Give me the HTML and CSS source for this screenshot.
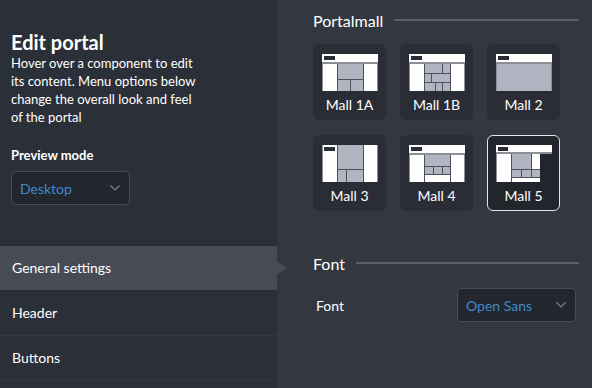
FILE: index.html
```html
<!DOCTYPE html>
<html>
<head>
	<title>Edit portal</title>
	<meta charset="UTF-8">
	<link rel="stylesheet" href="styles.css">
</head>
<body>
<div id="editor">
	<div id="sidebar">
		<div class="intro">
			<h1 class="intro-title">Edit portal</h1>
			<p class="intro-text">Hover over a component to edit its content. Menu options below change the overall look and feel of the portal</p>
			<h2 class="field-label">Preview mode</h2>
			<div class="select">
				<span>Desktop</span>
				<svg width="10" height="6" viewBox="0 0 10 6"><path d="M0.5 0.5 L5 5 L9.5 0.5" fill="none" stroke="#7f838c" stroke-width="1.2"/></svg>
			</div>
		</div>
		<ul class="menu">
			<li class="menu-item on">General settings</li>
			<li class="menu-item">Header</li>
			<li class="menu-item">Buttons</li>
		</ul>
	</div>
	<div id="main">
		<div class="section-head">
			<span>Portalmall</span>
			<div class="section-line"></div>
		</div>
		<div class="layouts">
			<div class="layout">
				<svg class="thumb" width="56" height="37" viewBox="0 0 56 37" shape-rendering="crispEdges">
					<rect x="0" y="0" width="56" height="37" fill="#fff"/>
					<rect x="0" y="8" width="56" height="2" fill="#8c8f97"/>
					<rect x="2" y="2" width="11" height="4" fill="#2a2d35"/>
					<rect x="0" y="10" width="1" height="27" fill="#8c8f97"/>
					<rect x="55" y="10" width="1" height="27" fill="#8c8f97"/>
					<rect x="15" y="10" width="27" height="27" fill="#4d5159"/>
					<rect x="16" y="10" width="25" height="15" fill="#b0b5c1"/>
					<rect x="16" y="26" width="12" height="11" fill="#b0b5c1"/>
					<rect x="29" y="26" width="12" height="11" fill="#b0b5c1"/>
				</svg>
				<div class="layout-name">Mall 1A</div>
			</div>
			<div class="layout">
				<svg class="thumb" width="56" height="37" viewBox="0 0 56 37" shape-rendering="crispEdges">
					<rect x="0" y="0" width="56" height="37" fill="#fff"/>
					<rect x="0" y="8" width="56" height="2" fill="#8c8f97"/>
					<rect x="2" y="2" width="11" height="4" fill="#2a2d35"/>
					<rect x="0" y="10" width="1" height="27" fill="#8c8f97"/>
					<rect x="55" y="10" width="1" height="27" fill="#8c8f97"/>
					<rect x="15" y="10" width="27" height="27" fill="#4d5159"/>
					<rect x="16" y="10" width="17" height="9" fill="#b0b5c1"/>
					<rect x="34" y="10" width="7" height="9" fill="#b0b5c1"/>
					<rect x="16" y="20" width="6" height="8" fill="#b0b5c1"/>
					<rect x="23" y="20" width="18" height="8" fill="#b0b5c1"/>
					<rect x="16" y="29" width="10" height="8" fill="#b0b5c1"/>
					<rect x="27" y="29" width="6" height="8" fill="#b0b5c1"/>
					<rect x="34" y="29" width="7" height="8" fill="#b0b5c1"/>
				</svg>
				<div class="layout-name">Mall 1B</div>
			</div>
			<div class="layout">
				<svg class="thumb" width="56" height="37" viewBox="0 0 56 37" shape-rendering="crispEdges">
					<rect x="0" y="0" width="56" height="37" fill="#fff"/>
					<rect x="0" y="8" width="56" height="2" fill="#8c8f97"/>
					<rect x="2" y="2" width="11" height="4" fill="#2a2d35"/>
					<rect x="0" y="10" width="56" height="27" fill="#8c8f97"/>
					<rect x="1" y="10" width="54" height="27" fill="#b0b5c1"/>
				</svg>
				<div class="layout-name">Mall 2</div>
			</div>
			<div class="layout">
				<svg class="thumb" width="56" height="37" viewBox="0 0 56 37" shape-rendering="crispEdges">
					<rect x="0" y="0" width="56" height="37" fill="#fff"/>
					<rect x="2" y="2" width="11" height="4" fill="#2a2d35"/>
					<rect x="0" y="0" width="1" height="37" fill="#8c8f97"/>
					<rect x="55" y="0" width="1" height="37" fill="#8c8f97"/>
					<rect x="15" y="0" width="27" height="37" fill="#4d5159"/>
					<rect x="16" y="0" width="25" height="24" fill="#b0b5c1"/>
					<rect x="16" y="25" width="8" height="12" fill="#b0b5c1"/>
					<rect x="25" y="25" width="16" height="12" fill="#b0b5c1"/>
				</svg>
				<div class="layout-name">Mall 3</div>
			</div>
			<div class="layout">
				<svg class="thumb" width="56" height="37" viewBox="0 0 56 37" shape-rendering="crispEdges">
					<rect x="0" y="0" width="56" height="37" fill="#fff"/>
					<rect x="0" y="8" width="56" height="2" fill="#8c8f97"/>
					<rect x="2" y="2" width="11" height="4" fill="#2a2d35"/>
					<rect x="0" y="10" width="1" height="27" fill="#8c8f97"/>
					<rect x="55" y="10" width="1" height="27" fill="#8c8f97"/>
					<rect x="15" y="10" width="27" height="27" fill="#4d5159"/>
					<rect x="16" y="10" width="25" height="11" fill="#b0b5c1"/>
					<rect x="16" y="22" width="8" height="7" fill="#b0b5c1"/>
					<rect x="25" y="22" width="8" height="7" fill="#b0b5c1"/>
					<rect x="34" y="22" width="7" height="7" fill="#b0b5c1"/>
					<rect x="16" y="30" width="25" height="7" fill="#fff"/>
				</svg>
				<div class="layout-name">Mall 4</div>
			</div>
			<div class="layout on">
				<svg class="thumb" width="56" height="37" viewBox="0 0 56 37" shape-rendering="crispEdges">
					<rect x="0" y="0" width="56" height="7" fill="#fff"/>
					<rect x="0" y="7" width="56" height="2" fill="#8c8f97"/>
					<rect x="2" y="2" width="10" height="4" fill="#2a2d35"/>
					<rect x="0" y="9" width="15" height="28" fill="#fff"/>
					<rect x="0" y="9" width="1" height="28" fill="#8c8f97"/>
					<rect x="15" y="9" width="29" height="28" fill="#4d5159"/>
					<rect x="16" y="9" width="19" height="15" fill="#b0b5c1"/>
					<rect x="36" y="9" width="8" height="15" fill="#fff"/>
					<rect x="16" y="25" width="9" height="7" fill="#b0b5c1"/>
					<rect x="26" y="25" width="9" height="7" fill="#b0b5c1"/>
					<rect x="36" y="25" width="8" height="7" fill="#b0b5c1"/>
					<rect x="16" y="33" width="28" height="4" fill="#fff"/>
				</svg>
				<div class="layout-name">Mall 5</div>
			</div>
		</div>
		<div class="section-head font-head">
			<span>Font</span>
			<div class="section-line"></div>
		</div>
		<div class="field-row">
			<span class="field-row-label">Font</span>
			<div class="select">
				<span>Open Sans</span>
				<svg width="10" height="6" viewBox="0 0 10 6"><path d="M0.5 0.5 L5 5 L9.5 0.5" fill="none" stroke="#7f838c" stroke-width="1.2"/></svg>
			</div>
		</div>
	</div>
</div>
</body>
</html>
```

FILE: styles.css
```css
body{margin: 0; font-family: Lato, "Noto Sans", sans-serif; color: #fff;}
#editor{display: flex; width: 592px; height: 388px; overflow: hidden; background: #33373f;}

#sidebar{width: 277px; flex-shrink: 0; background: #2b2f37; position: relative; z-index: 1;}
.intro{padding: 30px 11px 0 11px;}
.intro-title{margin: 0; font-size: 20px; line-height: 24px; font-weight: bold;}
.intro-text{margin: 0; width: 195px; font-size: 13px; line-height: 18px;}
.field-label{margin: 20px 0 7px 0; font-size: 13px; line-height: 18px; font-weight: bold;}

.select{display: flex; align-items: center; justify-content: space-between; box-sizing: border-box; width: 119px; height: 34px; padding: 0 9px 0 8px; border: 1px solid #474b55; border-radius: 4px; background: #23262d; color: #3d8ad0; font-size: 14px;}

.menu{list-style: none; margin: 40px 0 0 0; padding: 0; border-top: 1px solid #262a31;}
.menu-item{position: relative; height: 44px; line-height: 44px; padding-left: 12px; font-size: 14px; border-bottom: 1px solid #353942;}
.menu-item.on{background: #474b54; border-bottom-color: #262a31;}
.menu-item.on:after{content: ""; position: absolute; left: 100%; top: 50%; margin-top: -7px; border-left: 10px solid #474b54; border-top: 7px solid transparent; border-bottom: 7px solid transparent;}

#main{flex: 1; padding: 10px 13px 0 36px;}
.section-head{display: flex; align-items: center; height: 20px; font-size: 16px;}
.section-line{flex: 1; height: 2px; margin-left: 11px; background: #595e68;}

.layouts{display: grid; grid-template-columns: repeat(3, 73px); gap: 15px 14px; margin-top: 14px;}
.layout{box-sizing: border-box; height: 76px; padding-top: 9px; border: 1px solid transparent; border-radius: 6px; background: #2a2d35; text-align: center;}
.layout.on{border-color: #e6e6e6; background: #22252c;}
.thumb{display: block; margin: 0 auto;}
.layout-name{margin-top: 4px; font-size: 14px; line-height: 20px;}

.font-head{margin-top: 42px;}
.field-row{display: flex; align-items: center; justify-content: space-between; margin-top: 15px; padding: 0 3px 0 3px; font-size: 14px;}
```
